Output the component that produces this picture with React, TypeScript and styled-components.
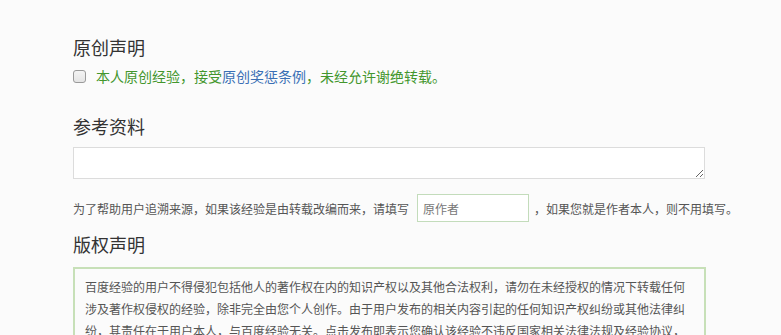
import React from "react";
import styled, { createGlobalStyle } from "styled-components";

const GlobalStyle = createGlobalStyle`
  html, body {
    margin: 0;
    padding: 0;
    background: #fbfbfb;
  }
  body {
    font-family: "Noto Sans CJK SC", "Noto Sans", sans-serif;
    color: #333;
  }
`;

const Page = styled.div`
  padding: 35px 0 0 73px;
  display: flex;
  flex-direction: column;
`;

const Title = styled.h2<{ gap?: number }>`
  margin: ${(p) => p.gap || 0}px 0 0;
  font-size: 18px;
  font-weight: normal;
  line-height: 24px;
  color: #333;
`;

const CheckRow = styled.label`
  margin-top: 7px;
  display: flex;
  align-items: center;
  gap: 10px;
  height: 20px;
  font-size: 14px;
  color: #43962d;
`;

const Check = styled.input`
  appearance: none;
  margin: 0;
  width: 13px;
  height: 13px;
  border: 1px solid #9a9a9a;
  border-radius: 3px;
  background: linear-gradient(#f4f4f4, #e4e4e4);
  box-sizing: border-box;
`;

const Link = styled.a`
  color: #3a6fb5;
  text-decoration: none;
`;

const Area = styled.textarea`
  margin-top: 9px;
  width: 632px;
  height: 32px;
  box-sizing: border-box;
  border: 1px solid #dcdcdc;
  background: #fff;
  outline: none;
  font-family: inherit;
`;

const SourceRow = styled.div`
  margin-top: 15px;
  display: flex;
  align-items: center;
  font-size: 12px;
  color: #555;
  white-space: nowrap;
`;

const AuthorInput = styled.input`
  margin: 0 5px 0 8px;
  width: 112px;
  height: 28px;
  box-sizing: border-box;
  border: 1px solid #c3dcbb;
  padding: 0 5px;
  background: #fff;
  font-size: 12px;
  font-family: inherit;
  outline: none;
  &::placeholder {
    color: #777;
  }
`;

const Notice = styled.div`
  margin-top: 11px;
  width: 633px;
  box-sizing: border-box;
  border: 2px solid #c7e0b8;
  padding: 7px 10px;
  font-size: 12px;
  line-height: 22px;
  color: #555;
`;

export default function App() {
  return (
    <>
      <GlobalStyle />
      <Page>
        <Title>原创声明</Title>
        <CheckRow>
          <Check type="checkbox" />
          <span>
            本人原创经验，接受<Link href="#">原创奖惩条例</Link>，未经允许谢绝转载。
          </span>
        </CheckRow>

        <Title gap={28}>参考资料</Title>
        <Area />
        <SourceRow>
          为了帮助用户追溯来源，如果该经验是由转载改编而来，请填写
          <AuthorInput placeholder="原作者" />
          ，如果您就是作者本人，则不用填写。
        </SourceRow>

        <Title gap={10}>版权声明</Title>
        <Notice>
          百度经验的用户不得侵犯包括他人的著作权在内的知识产权以及其他合法权利，请勿在未经授权的情况下转载任何涉及著作权侵权的经验，除非完全由您个人创作。由于用户发布的相关内容引起的任何知识产权纠纷或其他法律纠纷，其责任在于用户本人，与百度经验无关。点击发布即表示您确认该经验不违反国家相关法律法规及经验协议，并同意百度经验在其产品中展示该经验内容。
        </Notice>
      </Page>
    </>
  );
}
